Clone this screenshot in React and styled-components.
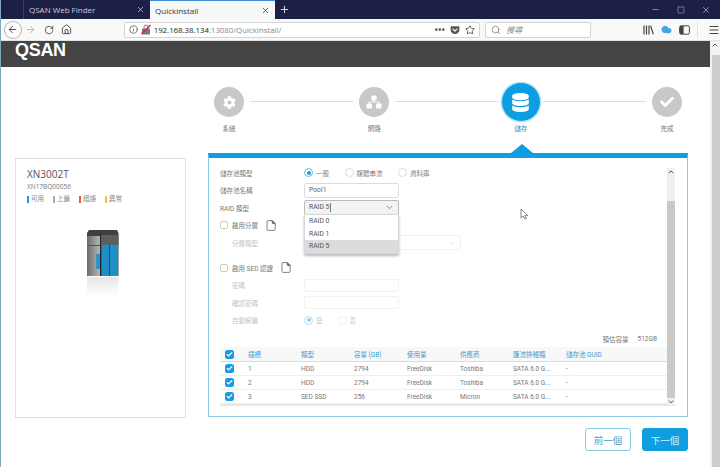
import React from 'react'
import styled, { createGlobalStyle } from 'styled-components'
import { ArrowLeft, ArrowRight, RotateCw, Home, Info, Star, Search, Cloud, Menu, Minus, Square, X, Plus, ChevronDown, ChevronUp, Check } from 'lucide-react'
import { FaCog, FaDatabase, FaCheck, FaGetPocket } from 'react-icons/fa'

const CJK = `Roboto, "Noto Sans CJK TC", sans-serif`

const GlobalStyle = createGlobalStyle`
    html, body {
        margin: 0;
        padding: 0;
        background: #fff;
        overflow: hidden;
    }
    * { box-sizing: border-box; }
`

const Window = styled.div`
    width: 720px;
    height: 467px;
    display: flex;
    flex-direction: column;
    overflow: hidden;
    font-family: ${CJK};
    border-left: 1px solid #7fa8c0;
`

const TabBar = styled.div`
    height: 19px;
    background: #1c2046;
    display: flex;
    align-items: stretch;
    padding-left: 22px;
    color: #e4e5ea;
`

const Tab = styled.div`
    width: ${p => (p.$active ? 125 : 127)}px;
    display: flex;
    align-items: center;
    justify-content: space-between;
    padding: 0 5px;
    font: 8px "Open Sans", sans-serif;
    color: ${p => (p.$active ? '#333' : '#c9cbd6')};
    background: ${p => (p.$active ? '#f7f8f9' : 'transparent')};
    border-top: ${p => (p.$active ? '1px solid #3d8fd6' : 'none')};
    border-left: ${p => (p.$active ? 'none' : '1px solid #3a3e60')};
`

const NewTab = styled.div`
    width: 18px;
    display: flex;
    align-items: center;
    justify-content: center;
`

const WindowButtons = styled.div`
    margin-left: auto;
    width: 69px;
    display: flex;
    align-items: center;
    justify-content: space-between;
    padding-right: 9px;
    color: #9ea1b3;
`

const Toolbar = styled.div`
    height: 22px;
    background: #f9f9fa;
    display: flex;
    align-items: center;
    color: #444;
    border-bottom: 1px solid #e2e2e4;
`

const BackButton = styled.div`
    width: 18px;
    height: 18px;
    margin-left: 3px;
    border-radius: 50%;
    border: 1px solid #b5b5b8;
    background: #fff;
    display: flex;
    align-items: center;
    justify-content: center;
`

const NavIcon = styled.div`
    width: 18px;
    display: flex;
    justify-content: center;
    color: ${p => (p.$dim ? '#b4b4b6' : '#444')};
`

const UrlBar = styled.div`
    width: 358px;
    height: 16px;
    margin-left: 48px;
    background: #fff;
    border: 1px solid #d4d4d6;
    border-radius: 2px;
    display: flex;
    align-items: center;
    padding: 0 4px;
    gap: 3px;
    font: 7.8px "Open Sans", sans-serif;
    color: #222;
`

const UrlMuted = styled.span`
    color: #8a8a8a;
`

const UrlActions = styled.div`
    margin-left: auto;
    display: flex;
    align-items: center;
    gap: 5px;
`

const Dots = styled.span`
    font-size: 8px;
    font-weight: 700;
    letter-spacing: 0.5px;
    color: #555;
    margin-bottom: 1px;
`

const SearchBar = styled.div`
    width: 106px;
    height: 16px;
    margin-left: 5px;
    background: #fff;
    border: 1px solid #d4d4d6;
    border-radius: 2px;
    display: flex;
    align-items: center;
    gap: 5px;
    padding: 0 5px;
    font: italic 8px "Noto Sans CJK TC", sans-serif;
    color: #888;
`

const ToolIcons = styled.div`
    margin-left: 52px;
    display: flex;
    align-items: center;
    gap: 7px;
`

const ToolDivider = styled.div`
    width: 1px;
    height: 16px;
    background: #e4e4e6;
    margin-right: 3px;
`

const Body = styled.div`
    flex: 1;
    display: flex;
    min-height: 0;
`

const Viewport = styled.div`
    flex: 1;
    display: flex;
    flex-direction: column;
    min-width: 0;
`

const PageScrollbar = styled.div`
    width: 10px;
    background: #f3f3f3;
    display: flex;
    flex-direction: column;
    align-items: center;
    color: #555;
`

const PageThumb = styled.div`
    margin-top: 6px;
    flex: 1;
    width: 8px;
    margin-left: 2px;
    background: #cdcdcd;
`

const Header = styled.header`
    height: 26px;
    background: #444;
    padding: 2px 0 0 14px;
`

const Logo = styled.div`
    font: 700 18px/14px "Liberation Sans", sans-serif;
    letter-spacing: -0.3px;
    color: #fff;
`

const Main = styled.main`
    flex: 1;
    display: flex;
    align-items: flex-start;
    padding: 15px 0 0 14px;
    background: #fff;
`

const DeviceCard = styled.section`
    width: 171px;
    height: 260px;
    margin-top: 76px;
    margin-right: 22px;
    border: 1px solid #e2e2e2;
    padding: 9px 11px;
    display: flex;
    flex-direction: column;
`

const DeviceName = styled.div`
    font: 10px/12px "Open Sans", sans-serif;
    color: #555;
`

const DeviceSerial = styled.div`
    font: 6.5px/9px "Open Sans", sans-serif;
    color: #777;
    margin-top: 2px;
`

const Legend = styled.div`
    display: flex;
    gap: 9px;
    margin-top: 4px;
`

const LegendItem = styled.span`
    display: flex;
    align-items: center;
    gap: 2px;
    font-size: 6.5px;
    line-height: 9px;
    color: #888;
    &::before {
        content: '';
        width: 2px;
        height: 7px;
        background: ${p => p.$color};
    }
`

const DeviceFigure = styled.div`
    margin: 26px 0 0 60px;
    line-height: 0;
`

const Wizard = styled.div`
    width: 480px;
    display: flex;
    flex-direction: column;
`

const Stepper = styled.div`
    display: flex;
    align-items: flex-start;
    height: 52px;
    margin-bottom: 19px;
`

const Step = styled.div`
    width: ${p => (p.$active ? 44 : 42)}px;
    display: flex;
    flex-direction: column;
    align-items: center;
`

const StepSlot = styled.div`
    height: 40px;
    display: flex;
    align-items: center;
    justify-content: center;
`

const StepCircle = styled.div`
    width: ${p => (p.$active ? 38 : 30)}px;
    height: ${p => (p.$active ? 38 : 30)}px;
    border-radius: 50%;
    background: ${p => (p.$active ? '#0d9ee2' : '#c8c8c8')};
    box-shadow: ${p => (p.$active ? '0 0 0 1.5px #b5e4f8' : 'none')};
    color: #fff;
    display: flex;
    align-items: center;
    justify-content: center;
`

const StepLabel = styled.div`
    margin-top: 2px;
    font-size: 6.5px;
    line-height: 10px;
    color: ${p => (p.$active ? '#2f8fc4' : '#777')};
`

const Connector = styled.div`
    flex: 1;
    height: 1px;
    margin-top: 19px;
    background: #dedede;
`

const Panel = styled.section`
    position: relative;
    height: 264px;
    border: 1px solid #8cc8e4;
    border-top: 5px solid #0f9fe0;
    display: flex;
    &::before {
        content: '';
        position: absolute;
        left: 302px;
        top: -14px;
        border-left: 11px solid transparent;
        border-right: 11px solid transparent;
        border-bottom: 9px solid #0f9fe0;
    }
`

const PanelContent = styled.div`
    width: 458px;
    padding: 6px 0 0 11px;
`

const FormRow = styled.div`
    position: relative;
    height: 17.5px;
    display: flex;
    align-items: center;
    margin-top: ${p => (p.$gap ? 7.5 : 0)}px;
    font-size: 6.5px;
    color: ${p => (p.$disabled ? '#c4c4c4' : '#777')};
`

const Label = styled.div`
    width: 84px;
    padding-left: ${p => (p.$indent ? 12 : 0)}px;
    flex-shrink: 0;
`

const RadioGroup = styled.div`
    display: flex;
    align-items: center;
    gap: ${p => (p.$wide ? 15.5 : 15)}px;
`

const RadioOption = styled.label`
    display: flex;
    align-items: center;
    gap: 3px;
`

const RadioMark = styled.span`
    width: 9px;
    height: 9px;
    border-radius: 50%;
    border: 1px solid ${p => (p.$on ? '#5db8e8' : '#ddd')};
    display: flex;
    align-items: center;
    justify-content: center;
    &::after {
        content: '';
        width: 4px;
        height: 4px;
        border-radius: 50%;
        background: ${p => (p.$on ? '#1a9be0' : 'transparent')};
    }
    opacity: ${p => (p.$faded ? 0.45 : 1)};
`

const TextField = styled.div`
    width: 95px;
    height: ${p => (p.$faint ? 13 : 15)}px;
    border: 1px solid ${p => (p.$faint ? '#f2f2f2' : '#dcdcdc')};
    border-radius: 2px;
    padding-left: 4px;
    display: flex;
    align-items: center;
    color: #666;
    font-size: 6.8px;
`

const SelectField = styled.div`
    width: ${p => p.$width}px;
    height: 15px;
    border: 1px solid ${p => (p.$faint ? '#f2f2f2' : '#bbb')};
    background: ${p => (p.$faint ? '#fff' : '#f3f3f3')};
    border-radius: 2px;
    padding: 0 4px;
    display: flex;
    align-items: center;
    justify-content: space-between;
    color: #555;
    font-size: 6.8px;
`

const Caret = styled.span`
    display: inline-block;
    width: 1px;
    height: 9px;
    margin-left: 1px;
    background: #777;
    vertical-align: middle;
`

const Dropdown = styled.ul`
    position: absolute;
    left: 84px;
    top: 15px;
    width: 95px;
    margin: 0;
    padding: 0;
    list-style: none;
    background: #fff;
    border: 1px solid #d8d8d8;
    border-radius: 0 0 2px 2px;
    box-shadow: 0 2px 3px rgba(0, 0, 0, 0.28);
    z-index: 2;
`

const DropdownItem = styled.li`
    height: 12.7px;
    line-height: 12.7px;
    padding-left: 4px;
    font-size: 6.8px;
    color: #555;
    background: ${p => (p.$selected ? '#dcdcdc' : '#fff')};
`

const CheckRow = styled.div`
    display: flex;
    align-items: center;
    gap: 4px;
`

const EmptyBox = styled.span`
    width: 8px;
    height: 8px;
    border: 1px solid #ccc;
    border-radius: 2px;
`

const DocSlot = styled.span`
    margin-left: 4px;
    line-height: 0;
`

const Estimate = styled.div`
    height: 17px;
    margin-top: 1px;
    padding-right: 10px;
    display: flex;
    align-items: center;
    justify-content: flex-end;
    gap: 9px;
    font-size: 6.5px;
    color: #777;
`

const TableRow = styled.div`
    height: ${p => (p.$head ? 15 : 14)}px;
    display: grid;
    grid-template-columns: 28px repeat(6, 53px) 1fr;
    align-items: center;
    font-size: 6.5px;
    color: ${p => (p.$head ? '#3c9bd0' : '#777')};
    background: ${p => (p.$head ? '#f7f8f8' : '#fff')};
    border-bottom: 1px solid ${p => (p.$head ? '#dcdcdc' : '#efefef')};
`

const TableFoot = styled.div`
    height: 2px;
    background: #e8e8e8;
`

const CheckMark = styled.span`
    width: 9px;
    height: 9px;
    margin-left: 5px;
    border-radius: 2.5px;
    background: #1a9be0;
    color: #fff;
    display: flex;
    align-items: center;
    justify-content: center;
`

const InnerScrollbar = styled.div`
    width: 8px;
    margin-top: 10px;
    height: 238px;
    background: #efefef;
    display: flex;
    flex-direction: column;
    align-items: center;
    color: #555;
`

const InnerThumb = styled.div`
    width: 8px;
    margin-top: 25px;
    height: 202px;
    background: #c9c9c9;
`

const MouseCursor = styled.svg`
    position: absolute;
    left: 311px;
    top: 50px;
`

const Actions = styled.div`
    display: flex;
    justify-content: flex-end;
    gap: 11px;
    margin-top: 11px;
`

const ActionButton = styled.button`
    width: 46px;
    height: 23px;
    padding: 0;
    border-radius: 3px;
    font-family: ${CJK};
    font-size: 9.5px;
    border: 1px solid ${p => (p.$primary ? '#0f9fe0' : '#8cc8e4')};
    background: ${p => (p.$primary ? '#0f9fe0' : '#fff')};
    color: ${p => (p.$primary ? '#d8f0fb' : '#4a9cc8')};
`

const DocIcon = () => (
    <DocSlot>
        <svg width="10" height="11" viewBox="0 0 10 11" fill="none" stroke="#666" strokeWidth="0.8">
            <path d="M1 1.5 Q1 .6 2 .6 H6.2 L9.2 3.6 V9.4 Q9.2 10.4 8.2 10.4 H2 Q1 10.4 1 9.4 Z" />
            <path d="M6.2 .6 L9.2 3.6 H7 Q6.2 3.6 6.2 2.8 Z" fill="#666" />
        </svg>
    </DocSlot>
)

const TrackingIcon = () => (
    <svg width="10" height="11" viewBox="0 0 10 11">
        <rect x="1" y="4.5" width="8" height="6" rx="1" fill="#777" />
        <path d="M3 4.5 V3 a2 2 0 0 1 4 0 V4.5" fill="none" stroke="#777" />
        <path d="M0.5 10 L9.5 1" stroke="#d7264f" strokeWidth="1.4" />
    </svg>
)

const LibraryIcon = () => (
    <svg width="11" height="10" viewBox="0 0 11 10" fill="none" stroke="#444" strokeWidth="1.2">
        <path d="M1 .5 V9.5 M3.5 .5 V9.5 M6 .5 V9.5 M7.6 .7 L10.3 9.4" />
    </svg>
)

const SidebarIcon = () => (
    <svg width="11" height="10" viewBox="0 0 11 10">
        <rect x=".6" y=".8" width="9.8" height="8.4" rx="1.6" fill="none" stroke="#444" strokeWidth="1" />
        <rect x="1" y="1" width="3.6" height="8" fill="#444" />
    </svg>
)

const NetworkIcon = () => (
    <svg width="16" height="14" viewBox="0 0 16 14">
        <circle cx="8" cy="3" r="2.8" fill="#fff" />
        <path d="M8 5 V7 M3 9 V7 H13 V9" fill="none" stroke="#fff" strokeWidth="0.9" />
        <rect x="0.5" y="8.5" width="5.5" height="5" rx="1" fill="#fff" />
        <rect x="10" y="8.5" width="5.5" height="5" rx="1" fill="#fff" />
    </svg>
)

const NasDevice = () => (
    <svg width="32" height="66" viewBox="0 0 32 66">
        <defs>
            <linearGradient id="body" x1="0" y1="0" x2="1" y2="0">
                <stop offset="0" stopColor="#6a6d70" />
                <stop offset="1" stopColor="#b4b6b7" />
            </linearGradient>
            <linearGradient id="mirror" x1="0" y1="0" x2="0" y2="1">
                <stop offset="0" stopColor="#e6e6e6" />
                <stop offset="1" stopColor="#fff" />
            </linearGradient>
        </defs>
        <path d="M2 0 H30 L31.5 3 V46 H0 V3 Z" fill="#3e4143" />
        <rect x="0" y="6" width="13" height="40" fill="url(#body)" />
        <rect x="13" y="3" width="1" height="43" fill="#222" />
        <rect x="14" y="5" width="17.5" height="10" fill="#5c5f61" />
        <rect x="0" y="15" width="13" height="1" fill="#555" />
        <rect x="14.5" y="15" width="7.5" height="31" fill="#1f8fc9" />
        <rect x="23" y="15" width="8" height="31" fill="#1f8fc9" />
        <rect x="9" y="24" width="4" height="15" fill="#2f93c6" />
        <rect x="0" y="47" width="31.5" height="19" fill="url(#mirror)" />
    </svg>
)

const drives = [
    { slot: 1, type: 'HDD', size: 2794, vendor: 'Toshiba' },
    { slot: 2, type: 'HDD', size: 2794, vendor: 'Toshiba' },
    { slot: 3, type: 'SED SSD', size: 256, vendor: 'Micron' },
]

const steps = [
    { label: '系統', icon: <FaCog size={13} /> },
    { label: '網路', icon: <NetworkIcon /> },
    { label: '儲存', icon: <FaDatabase size={19} />, active: true },
    { label: '完成', icon: <FaCheck size={14} /> },
]

const Tick = () => (
    <CheckMark>
        <Check size={7} strokeWidth={4} />
    </CheckMark>
)

export default function App() {
    return (
        <Window>
            <GlobalStyle />
            <TabBar>
                <Tab>
                    QSAN Web Finder
                    <X size={9} />
                </Tab>
                <Tab $active>
                    Quickinstall
                    <X size={9} />
                </Tab>
                <NewTab>
                    <Plus size={11} />
                </NewTab>
                <WindowButtons>
                    <Minus size={9} />
                    <Square size={8} />
                    <X size={10} />
                </WindowButtons>
            </TabBar>
            <Toolbar>
                <BackButton>
                    <ArrowLeft size={11} />
                </BackButton>
                <NavIcon $dim>
                    <ArrowRight size={11} />
                </NavIcon>
                <NavIcon>
                    <RotateCw size={10} />
                </NavIcon>
                <NavIcon>
                    <Home size={11} />
                </NavIcon>
                <UrlBar>
                    <Info size={9} color="#555" />
                    <TrackingIcon />
                    <span>
                        192.168.38.134<UrlMuted>:13080/QuickInstall/</UrlMuted>
                    </span>
                    <UrlActions>
                        <Dots>•••</Dots>
                        <FaGetPocket size={10} color="#555" />
                        <Star size={10} color="#444" />
                    </UrlActions>
                </UrlBar>
                <SearchBar>
                    <Search size={10} color="#888" />
                    搜尋
                </SearchBar>
                <ToolIcons>
                    <LibraryIcon />
                    <Cloud size={11} color="#3fa4e8" fill="#3fa4e8" />
                    <SidebarIcon />
                    <ToolDivider />
                    <Menu size={12} />
                </ToolIcons>
            </Toolbar>
            <Body>
                <Viewport>
                    <Header>
                        <Logo>QSAN</Logo>
                    </Header>
                    <Main>
                        <DeviceCard>
                            <DeviceName>XN3002T</DeviceName>
                            <DeviceSerial>XN17BQ00056</DeviceSerial>
                            <Legend>
                                <LegendItem $color="#1a9be0">可用</LegendItem>
                                <LegendItem $color="#aaa">上鎖</LegendItem>
                                <LegendItem $color="#e0603c">錯誤</LegendItem>
                                <LegendItem $color="#f0c040">異常</LegendItem>
                            </Legend>
                            <DeviceFigure>
                                <NasDevice />
                            </DeviceFigure>
                        </DeviceCard>
                        <Wizard>
                            <Stepper>
                                {steps.map((s, i) => (
                                    <React.Fragment key={s.label}>
                                        {i > 0 && <Connector />}
                                        <Step $active={s.active}>
                                            <StepSlot>
                                                <StepCircle $active={s.active}>{s.icon}</StepCircle>
                                            </StepSlot>
                                            <StepLabel $active={s.active}>{s.label}</StepLabel>
                                        </Step>
                                    </React.Fragment>
                                ))}
                            </Stepper>
                            <Panel>
                                <PanelContent>
                                    <FormRow>
                                        <Label>儲存池類型</Label>
                                        <RadioGroup $wide>
                                            <RadioOption><RadioMark $on />一般</RadioOption>
                                            <RadioOption><RadioMark />媒體串流</RadioOption>
                                            <RadioOption><RadioMark />資料庫</RadioOption>
                                        </RadioGroup>
                                    </FormRow>
                                    <FormRow>
                                        <Label>儲存池名稱</Label>
                                        <TextField>Pool1</TextField>
                                    </FormRow>
                                    <FormRow>
                                        <Label>RAID 類型</Label>
                                        <SelectField $width={95}>
                                            <span>RAID 5<Caret /></span>
                                            <ChevronDown size={9} strokeWidth={2.5} color="#4a9cc8" />
                                        </SelectField>
                                        <Dropdown>
                                            <DropdownItem>RAID 0</DropdownItem>
                                            <DropdownItem>RAID 1</DropdownItem>
                                            <DropdownItem $selected>RAID 5</DropdownItem>
                                        </Dropdown>
                                    </FormRow>
                                    <FormRow>
                                        <CheckRow>
                                            <EmptyBox />
                                            啟用分層
                                            <DocIcon />
                                        </CheckRow>
                                    </FormRow>
                                    <FormRow $disabled>
                                        <Label $indent>分層類型</Label>
                                        <SelectField $width={157} $faint>
                                            <span />
                                            <ChevronDown size={8} color="#d8e8f0" />
                                        </SelectField>
                                    </FormRow>
                                    <FormRow $gap>
                                        <CheckRow>
                                            <EmptyBox />
                                            啟用 SED 認證
                                            <DocIcon />
                                        </CheckRow>
                                    </FormRow>
                                    <FormRow $disabled>
                                        <Label $indent>密碼</Label>
                                        <TextField $faint />
                                    </FormRow>
                                    <FormRow $disabled>
                                        <Label $indent>確認密碼</Label>
                                        <TextField $faint />
                                    </FormRow>
                                    <FormRow $disabled>
                                        <Label $indent>自動解鎖</Label>
                                        <RadioGroup>
                                            <RadioOption><RadioMark $on $faded />是</RadioOption>
                                            <RadioOption><RadioMark $faded />否</RadioOption>
                                        </RadioGroup>
                                    </FormRow>
                                    <Estimate>
                                        <span>預估容量</span>
                                        <span>512GB</span>
                                    </Estimate>
                                    <TableRow $head>
                                        <Tick />
                                        <span>插槽</span>
                                        <span>類型</span>
                                        <span>容量 (GB)</span>
                                        <span>使用量</span>
                                        <span>供應商</span>
                                        <span>匯流排種類</span>
                                        <span>儲存池 GUID</span>
                                    </TableRow>
                                    {drives.map(d => (
                                        <TableRow key={d.slot}>
                                            <Tick />
                                            <span>{d.slot}</span>
                                            <span>{d.type}</span>
                                            <span>{d.size}</span>
                                            <span>FreeDisk</span>
                                            <span>{d.vendor}</span>
                                            <span>SATA 6.0 G...</span>
                                            <span>-</span>
                                        </TableRow>
                                    ))}
                                    <TableFoot />
                                </PanelContent>
                                <InnerScrollbar>
                                    <ChevronUp size={8} strokeWidth={3} />
                                    <InnerThumb />
                                    <ChevronDown size={8} strokeWidth={3} />
                                </InnerScrollbar>
                                <MouseCursor width="9" height="12" viewBox="0 0 9 12">
                                    <path d="M1 1 V10 L3.2 8 L5 11.2 L6.4 10.4 L4.8 7.4 H7.8 Z" fill="#fff" stroke="#666" strokeWidth="0.8" />
                                </MouseCursor>
                            </Panel>
                            <Actions>
                                <ActionButton>前一個</ActionButton>
                                <ActionButton $primary>下一個</ActionButton>
                            </Actions>
                        </Wizard>
                    </Main>
                </Viewport>
                <PageScrollbar>
                    <ChevronUp size={8} strokeWidth={3} />
                    <PageThumb />
                </PageScrollbar>
            </Body>
        </Window>
    )
}
